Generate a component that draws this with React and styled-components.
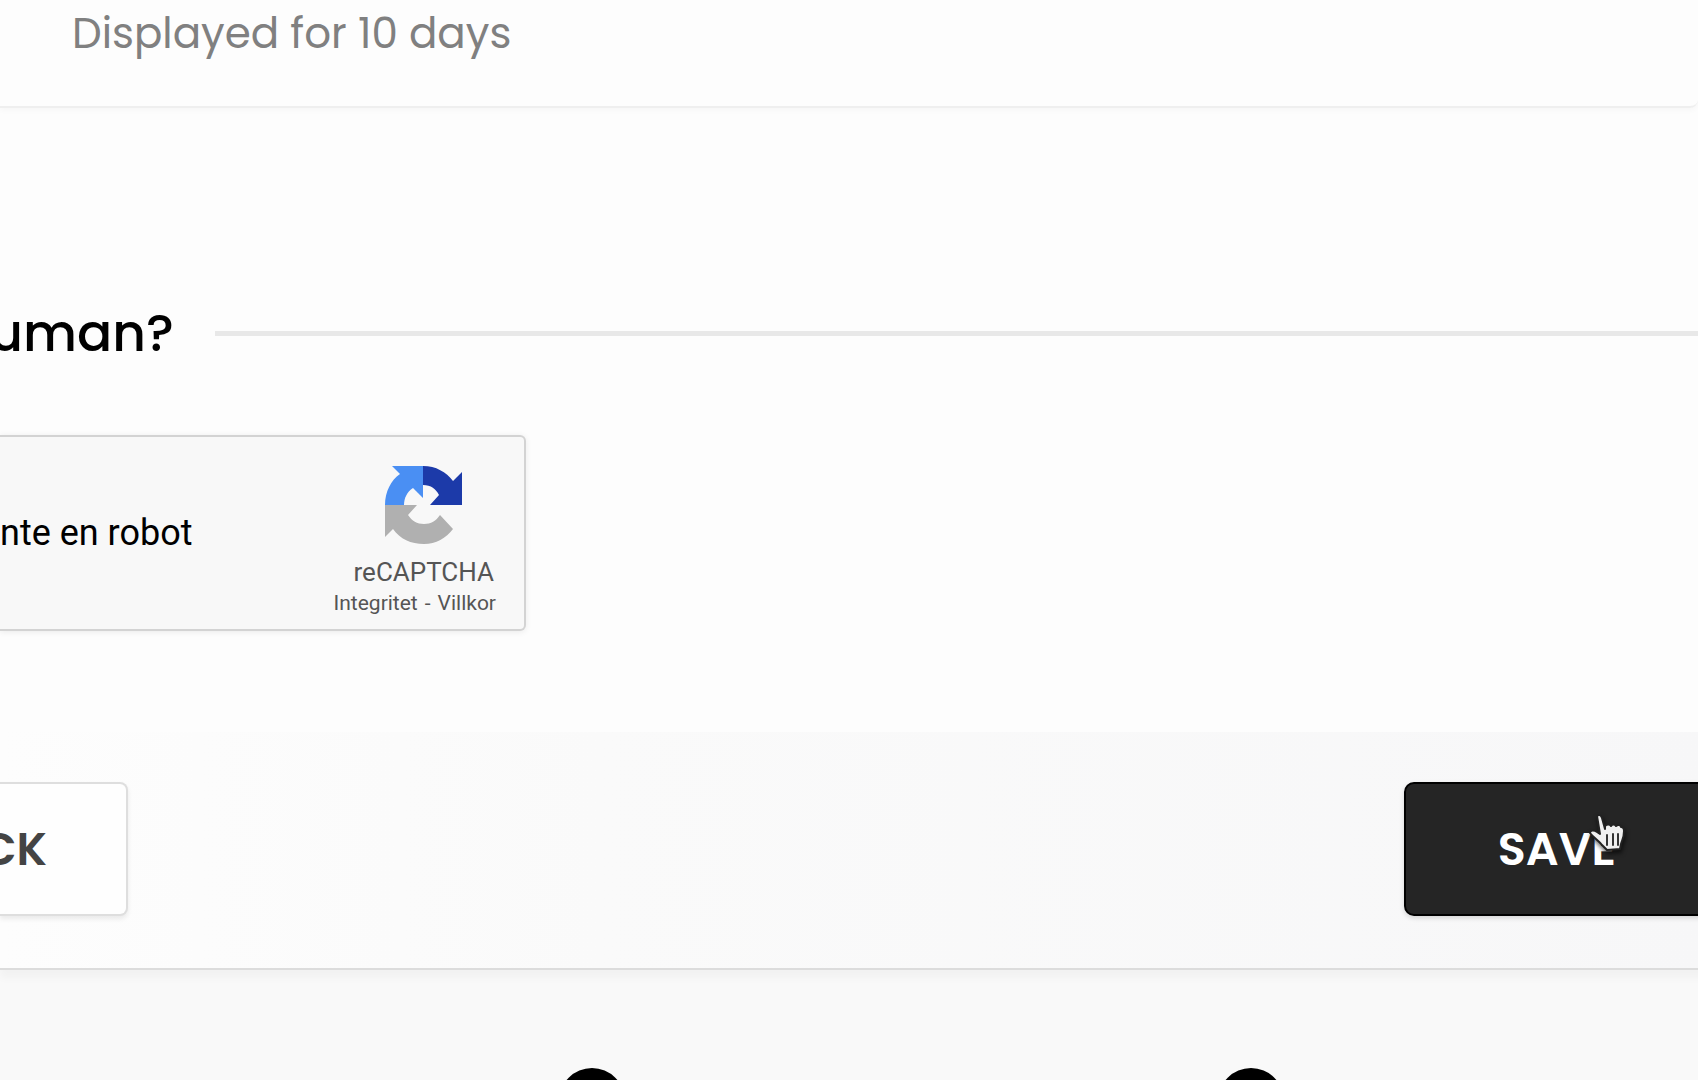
import React from "react";
import styled, { createGlobalStyle } from "styled-components";

const GlobalStyle = createGlobalStyle`
  * {
    box-sizing: border-box;
  }
  body {
    margin: 0;
    background: #f9f9f9;
    font-family: Poppins, Inter, sans-serif;
  }
`;

const Page = styled.main`
  display: flex;
  flex-direction: column;
  height: 100vh;
  overflow: hidden;
`;

const Content = styled.div`
  flex: none;
  background: #fdfdfd;
`;

const Card = styled.section`
  padding: 4px 72px 42px;
  border-bottom: 2px solid #efefef;
  border-bottom-right-radius: 8px;
  box-shadow: 0 2px 6px rgba(0, 0, 0, 0.03);
`;

const Duration = styled.p`
  margin: 0;
  color: #808080;
  font-size: 42px;
  line-height: 60px;
`;

const SectionHead = styled.div`
  display: flex;
  align-items: center;
  gap: 41px;
  margin-top: 185px;
`;

const Title = styled.h2`
  display: flex;
  justify-content: flex-end;
  width: 174px;
  margin: 0;
  color: #000;
  font-size: 52px;
  font-weight: 500;
  line-height: 80px;
`;

const Rule = styled.hr`
  flex: 1;
  height: 5px;
  margin: 0;
  border: 0;
  background: #e8e8e8;
`;

const Captcha = styled.section`
  display: flex;
  justify-content: space-between;
  align-items: center;
  width: 526px;
  height: 196px;
  margin: 62px 0 101px;
  padding-right: 28px;
  border: 2px solid #d3d3d3;
  border-left: 0;
  border-radius: 0 6px 6px 0;
  background: #f8f8f8;
  box-shadow: 0 1px 6px rgba(0, 0, 0, 0.08);
  font-family: Roboto, sans-serif;
`;

const CaptchaLabel = styled.span`
  color: #000;
  font-size: 36px;
`;

const Brand = styled.div`
  display: flex;
  flex-direction: column;
  align-items: flex-end;
  padding-top: 18px;
  color: #555;
`;

const BrandMark = styled.div`
  display: flex;
  flex-direction: column;
  align-items: center;
  padding-right: 2px;
`;

const BrandName = styled.span`
  margin-top: 12px;
  font-size: 26px;
  line-height: 32px;
`;

const BrandLinks = styled.div`
  display: flex;
  gap: 7px;
  font-size: 21px;
  line-height: 30px;

  a {
    color: inherit;
    text-decoration: none;
  }
`;

const Actions = styled.footer`
  display: flex;
  flex: none;
  justify-content: space-between;
  margin-right: -12px;
  padding: 50px 0 52px;
  border-bottom: 2px solid #dcdcdc;
  background: linear-gradient(90deg, #fdfdfd, #fafafa 35%, #f7f7f8);
  box-shadow: 0 8px 8px rgba(0, 0, 0, 0.03);
`;

const Button = styled.button`
  height: 134px;
  border: 2px solid;
  font-family: inherit;
  font-size: 46px;
  font-weight: 600;
  cursor: pointer;
`;

const BackButton = styled(Button)`
  display: flex;
  justify-content: flex-end;
  align-items: center;
  width: 128px;
  padding: 0 79px 0 0;
  border-color: #dedede;
  border-left: 0;
  border-radius: 0 8px 8px 0;
  background: #fefefe;
  box-shadow: 0 3px 5px rgba(0, 0, 0, 0.08);
  color: #444;
  overflow: hidden;
`;

const SaveButton = styled(Button)`
  position: relative;
  padding: 0 92px;
  border-color: #000;
  border-radius: 10px;
  background: #252525;
  box-shadow: 0 2px 5px rgba(0, 0, 0, 0.15);
  color: #fff;
`;

const Pointer = styled.svg`
  position: absolute;
  top: 28px;
  left: 181px;
  filter: drop-shadow(1px 3px 2px rgba(0, 0, 0, 0.6));
`;

const Steps = styled.div`
  display: grid;
  grid-template-columns: 1fr 1fr;
  justify-items: center;
  padding: 98px 118px 0 262px;
`;

const Dot = styled.span`
  width: 66px;
  height: 66px;
  border-radius: 50%;
  background: #000;
`;

function CaptchaLogo() {
  return (
    <svg width="78" height="78" viewBox="0 0 78 78" aria-hidden="true">
      <path
        fill="#1c3aa9"
        d="M38 0C51 0 61 6 68 15L77 6V39H45L54 29C51 23 46 19 38 19Z"
      />
      <path
        fill="#4a8ff3"
        d="M38 0H7L15 8C6 14 0 26 0 39H19C19 32 22 26 28 22L38 32Z"
      />
      <path
        fill="#b0b0b0"
        d="M0 39H32L23 49C27 55 32 58 39 58C46 58 51 55 55 49L68 63C61 72 51 78 39 78C26 78 15 73 8 63L0 71Z"
      />
    </svg>
  );
}

function HandPointer() {
  return (
    <Pointer width="42" height="48" viewBox="0 0 42 48" aria-hidden="true">
      <path
        fill="#f0f0f0"
        stroke="#222"
        strokeWidth="2"
        strokeLinejoin="round"
        d="M10 4C12 2 14 3 15 6L18 17L18 14C20 12 23 12 24 14C25 12 28 12 29 14C31 12 34 13 34 15C36 15 37 16 37 19C37 26 35 28 34 32L33 37L20 38L15 33C11 28 7 26 3 21C3 18 7 18 10 20L13 22Z"
      />
      <path
        fill="none"
        stroke="#333"
        strokeWidth="2"
        strokeLinecap="round"
        d="M20 23V33M26 22V33M31 22V33"
      />
    </Pointer>
  );
}

export default function App() {
  return (
    <>
      <GlobalStyle />
      <Page>
        <Content>
          <Card>
            <Duration>Displayed for 10 days</Duration>
          </Card>
          <SectionHead>
            <Title>uman?</Title>
            <Rule />
          </SectionHead>
          <Captcha>
            <CaptchaLabel>nte en robot</CaptchaLabel>
            <Brand>
              <BrandMark>
                <CaptchaLogo />
                <BrandName>reCAPTCHA</BrandName>
              </BrandMark>
              <BrandLinks>
                <a href="#privacy">Integritet</a>
                <span>-</span>
                <a href="#terms">Villkor</a>
              </BrandLinks>
            </Brand>
          </Captcha>
        </Content>
        <Actions>
          <BackButton type="button">CK</BackButton>
          <SaveButton type="button">
            SAVE
            <HandPointer />
          </SaveButton>
        </Actions>
        <Steps>
          <Dot />
          <Dot />
        </Steps>
      </Page>
    </>
  );
}
